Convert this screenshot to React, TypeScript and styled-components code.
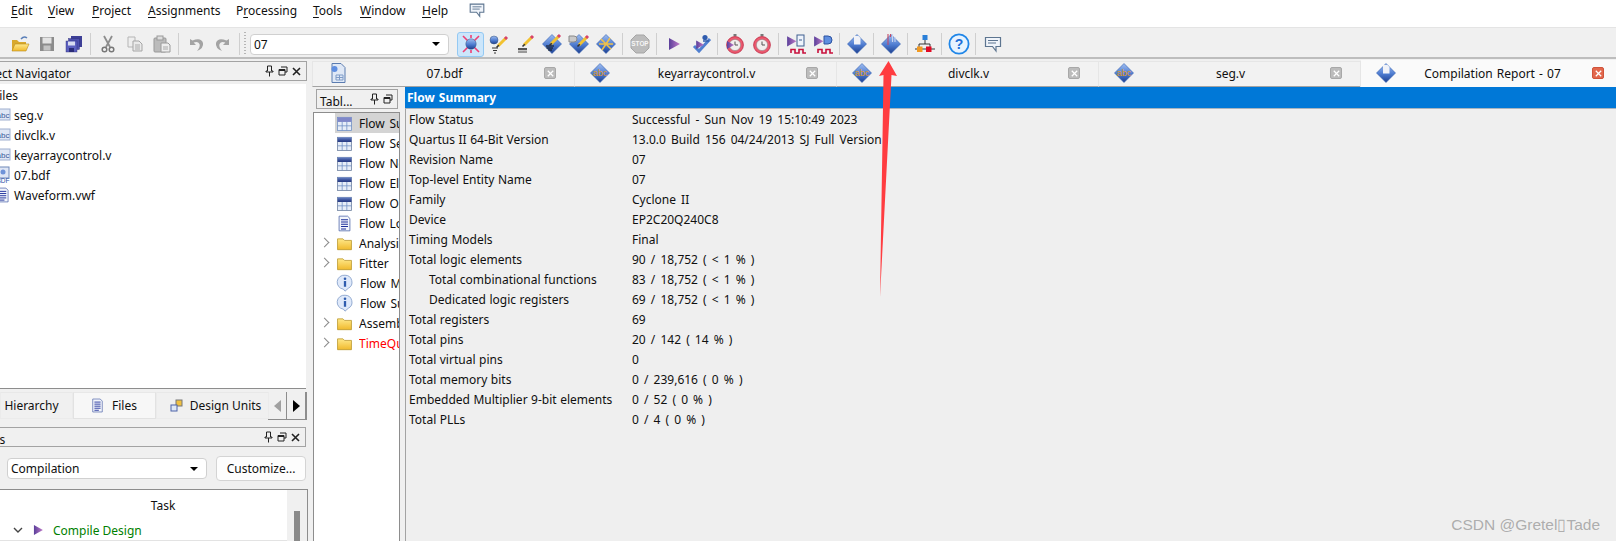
import styled, { createGlobalStyle } from 'styled-components';
import { ReactNode } from 'react';

const Global = createGlobalStyle`
  html, body { margin: 0; padding: 0; background: #f0f0f0; }
  body { font-family: 'Noto Sans', 'Open Sans', sans-serif; font-size: 12px; color: #101010; }
  svg { flex: none; }
`;

const Page = styled.div`
  position: relative;
  width: 1616px;
  height: 541px;
  overflow: hidden;
  display: flex;
  flex-direction: column;
  background: #f0f0f0;
`;

const MenuBar = styled.div`
  height: 28px;
  box-sizing: border-box;
  background: #fff;
  border-bottom: 1px solid #e4e4e4;
  padding: 0 0 5px 11px;
  display: flex;
  align-items: center;
`;

const MenuItem = styled.span<{ $w: number }>`
  width: ${p => p.$w}px;
  flex: none;
  line-height: 20px;
  u { text-underline-offset: 2px; }
`;

const MenuNote = styled.span`
  display: flex;
  margin: -3px 0 0 2px;
`;

const Toolbar = styled.div`
  height: 31px;
  box-sizing: border-box;
  border-bottom: 2px solid #bdbdbd;
  padding: 3px 0 0 6px;
  display: flex;
  align-items: center;
  background: #f0f0f0;
`;

const ToolBtn = styled.div<{ $on?: boolean }>`
  width: 27px;
  height: 25px;
  flex: none;
  box-sizing: border-box;
  display: flex;
  align-items: center;
  justify-content: center;
  border-radius: 3px;
  background: ${p => (p.$on ? '#cce6fb' : 'transparent')};
  border: 1px solid ${p => (p.$on ? '#94c9f3' : 'transparent')};
`;

const ToolSep = styled.div`
  width: 1px;
  height: 22px;
  margin: 0 3px;
  flex: none;
  background: #cfcfcf;
`;

const Grip = styled.div`
  width: 2px;
  height: 24px;
  margin: 0 4px 0 1px;
  flex: none;
  background: repeating-linear-gradient(#b5b5b5 0 1px, transparent 1px 3px);
`;

const Combo = styled.div<{ $w: number }>`
  width: ${p => p.$w}px;
  height: 21px;
  flex: none;
  box-sizing: border-box;
  border: 1px solid #d0d0d0;
  border-radius: 4px;
  background: #fff;
  padding: 0 8px 0 3px;
  display: flex;
  align-items: center;
  justify-content: space-between;
`;

const ComboArrow = styled.span`
  width: 0;
  height: 0;
  border-left: 4px solid transparent;
  border-right: 4px solid transparent;
  border-top: 4px solid #000;
`;

const ComboSlot = styled.div`
  margin-right: 8px;
  display: flex;
`;

const Main = styled.div`
  flex: 1;
  min-height: 0;
  display: flex;
`;

const LeftColumn = styled.div`
  width: 313px;
  flex: none;
  box-sizing: border-box;
  padding: 2px 6px 0 0;
  display: flex;
  flex-direction: column;
`;

const TitleBar = styled.div`
  height: 20px;
  flex: none;
  box-sizing: border-box;
  border: 1px solid #a3a3a3;
  border-left: none;
  overflow: hidden;
  display: flex;
  align-items: center;
  justify-content: space-between;
  padding-right: 5px;
`;

const ClippedTitle = styled.span<{ $cut: number }>`
  margin-left: -${p => p.$cut}px;
  white-space: nowrap;
  padding-top: 5px;
`;

const DockIcons = styled.div`
  display: flex;
  gap: 4px;
  align-items: center;
`;

const FileTree = styled.div`
  height: 305px;
  flex: none;
  margin-top: 3px;
  margin-right: 1px;
  box-sizing: border-box;
  background: #fff;
  border-bottom: 1px solid #8d8d8d;
  padding-top: 1px;
  overflow: hidden;
`;

const FileRow = styled.div`
  height: 20px;
  display: flex;
  align-items: center;
  gap: 3px;
  white-space: nowrap;
`;

const FileRoot = styled(FileRow)`
  margin-left: -7px;
`;

const FileIconSlot = styled.span`
  margin-left: -5px;
  width: 16px;
  flex: none;
  display: flex;
`;

const NavTabs = styled.div`
  height: 28px;
  flex: none;
  margin-top: 3px;
  display: flex;
`;

const NavTab = styled.div<{ $w: number; $on?: boolean; $shift?: number }>`
  width: ${p => p.$w}px;
  flex: none;
  box-sizing: border-box;
  display: flex;
  align-items: center;
  justify-content: center;
  gap: 7px;
  white-space: nowrap;
  height: 27px;
  padding-left: ${p => Math.max(p.$shift ?? 0, 0)}px;
  padding-right: ${p => Math.max(-(p.$shift ?? 0), 0)}px;
  background: ${p => (p.$on ? '#f7f7f7' : '#f0f0f0')};
  border: 1px solid ${p => (p.$on ? '#e2e2e2' : '#ebebeb')};
  border-top-color: #e8e8e8;
`;

const ScrollArrows = styled.div`
  display: flex;
  flex: none;
  height: 27px;
  border-right: 1px solid #8d8d8d;
  border-bottom: 1px solid #8d8d8d;
  margin-left: -1px;
`;

const ArrowBtn = styled.div<{ $off?: boolean; $dir: 'l' | 'r' }>`
  width: 19px;
  box-sizing: border-box;
  border-right: 1px solid #8d8d8d;
  display: flex;
  align-items: center;
  justify-content: center;
  &::before {
    content: '';
    border-top: 6px solid transparent;
    border-bottom: 6px solid transparent;
    border-${p => (p.$dir === 'l' ? 'right' : 'left')}: 7px solid ${p => (p.$off ? '#a0a0a0' : '#000')};
  }
`;

const TaskTitle = styled(TitleBar)`
  margin-top: 7px;
  margin-right: 1px;
`;

const TaskControls = styled.div`
  flex: none;
  height: 25px;
  margin-top: 9px;
  padding-left: 7px;
  display: flex;
  align-items: center;
  gap: 9px;
`;

const CustomizeBtn = styled.div`
  width: 90px;
  height: 25px;
  box-sizing: border-box;
  border: 1px solid #d4d4d4;
  border-radius: 4px;
  background: #fdfdfd;
  display: flex;
  align-items: center;
  justify-content: center;
`;

const TaskList = styled.div`
  flex: 1;
  margin-top: 8px;
  margin-right: -1px;
  box-sizing: border-box;
  background: #fff;
  border-top: 1px solid #8d8d8d;
  border-right: 1px solid #8d8d8d;
  display: flex;
  min-height: 0;
`;

const TaskBody = styled.div`
  flex: 1;
  padding-left: 7px;
`;

const TaskHead = styled.div`
  height: 30px;
  display: flex;
  align-items: center;
  justify-content: center;
  padding-left: 32px;
`;

const TaskRow = styled.div`
  height: 20px;
  border-bottom: 1px solid #e3e3e3;
  display: flex;
  align-items: center;
  margin-left: -7px;
  padding-left: 13px;
  color: #008000;
  gap: 6px;
`;

const TaskScroll = styled.div`
  width: 20px;
  flex: none;
  background: #f0f0f0;
  padding: 21px 0 0 7px;
  box-sizing: border-box;
`;

const TaskThumb = styled.div`
  width: 6px;
  height: 40px;
  background: #8a8a8a;
`;

const RightColumn = styled.div`
  flex: 1;
  min-width: 0;
  display: flex;
  flex-direction: column;
`;

const TabStrip = styled.div`
  height: 28px;
  flex: none;
  display: flex;
  margin-left: -1px;
`;

const DocTab = styled.div<{ $on?: boolean }>`
  width: 262px;
  flex: none;
  box-sizing: border-box;
  margin-top: ${p => (p.$on ? 1 : 2)}px;
  display: grid;
  grid-template-columns: 50px 1fr 48px;
  align-items: center;
  justify-items: center;
  word-spacing: 1px;
  background: ${p => (p.$on ? '#fafafa' : '#f2f2f2')};
  border-top: 1px solid ${p => (p.$on ? '#fafafa' : '#e6e6e6')};
  border-left: 1px solid #e6e6e6;
  border-bottom: ${p => (p.$on ? 'none' : '1px solid #a3a3a3')};
  padding-bottom: 2px;
`;

const CloseBox = styled.span<{ $on?: boolean }>`
  width: 12px;
  height: 12px;
  box-sizing: border-box;
  border-radius: 2px;
  display: flex;
  align-items: center;
  justify-content: center;
  background: ${p => (p.$on ? '#e2674c' : '#bcbcbc')};
  border: 1px solid ${p => (p.$on ? '#d0533a' : '#a8a8a8')};
`;

const Body = styled.div`
  flex: 1;
  min-height: 0;
  display: flex;
`;

const TablePane = styled.div`
  width: 87px;
  flex: none;
  display: flex;
  flex-direction: column;
`;

const TableTitle = styled(TitleBar)`
  margin: 2px 2px 0 3px;
  border: 1px solid #a3a3a3;
  padding-left: 3px;
  padding-right: 4px;
`;

const TableCaption = styled.span`
  padding-top: 4px;
`;

const ReportTree = styled.div`
  flex: 1;
  margin-top: 3px;
  box-sizing: border-box;
  background: #fff;
  border: 1px solid #8d8d8d;
  border-bottom: none;
  overflow: hidden;
`;

const TreeRow = styled.div<{ $sel?: boolean; $red?: boolean }>`
  height: 20px;
  margin-left: 21px;
  display: flex;
  align-items: center;
  gap: 6px;
  position: relative;
  white-space: nowrap;
  padding-left: 1px;
  color: ${p => (p.$red ? '#ff0000' : '#101010')};
  background: ${p => (p.$sel ? '#d4d4d4' : 'transparent')};
`;

const TreeName = styled.span`
  flex: 1;
  min-width: 0;
  overflow: hidden;
  word-spacing: 1.5px;
`;

const Chevron = styled.span`
  position: absolute;
  left: -14px;
  top: 6px;
  width: 6px;
  height: 6px;
  border-top: 1.5px solid #8a8a8a;
  border-right: 1.5px solid #8a8a8a;
  transform: rotate(45deg);
`;

const ReportPane = styled.div`
  flex: 1;
  margin-left: 5px;
  min-width: 0;
  display: flex;
  flex-direction: column;
`;

const ReportHead = styled.div`
  height: 21px;
  flex: none;
  box-sizing: border-box;
  background: #0078d7;
  color: #fff;
  font-weight: 700;
  padding-left: 2px;
  word-spacing: 1px;
  display: flex;
  align-items: center;
  padding-bottom: 1px;
`;

const ReportRows = styled.div`
  flex: 1;
  border-top: 1px solid #a8b4bf;
  border-left: 1px solid #a3a3a3;
  background: #efefef;
  padding-left: 3px;
`;

const ReportRow = styled.div`
  height: 20px;
  display: grid;
  grid-template-columns: 223px 1fr;
  align-items: center;
  white-space: nowrap;
`;

const RowLabel = styled.span<{ $indent?: boolean }>`
  padding-left: ${p => (p.$indent ? 20 : 0)}px;
  word-spacing: 0.4px;
`;

const RowValue = styled.span`
  word-spacing: 2px;
`;

const Watermark = styled.div`
  position: absolute;
  right: 16px;
  bottom: 7px;
  font-family: 'Liberation Sans', Arial, sans-serif;
  font-size: 15.5px;
  color: rgba(130, 130, 130, 0.62);
`;

const ArrowOverlay = styled.svg`
  position: absolute;
  left: 870px;
  top: 55px;
`;

const Gradients = () => (
  <svg width="0" height="0" style={{ position: 'absolute' }}>
    <defs>
      <linearGradient id="blueD" x1="0" y1="0" x2="0" y2="1">
        <stop offset="0" stopColor="#9fbdf0" />
        <stop offset="0.55" stopColor="#4d7bd0" />
        <stop offset="1" stopColor="#1d3f8f" />
      </linearGradient>
      <linearGradient id="folder" x1="0" y1="0" x2="0" y2="1">
        <stop offset="0" stopColor="#ffe98a" />
        <stop offset="1" stopColor="#f0b92c" />
      </linearGradient>
      <linearGradient id="purple" x1="0" y1="0" x2="1" y2="0">
        <stop offset="0" stopColor="#5a3f9a" />
        <stop offset="1" stopColor="#c07ac8" />
      </linearGradient>
      <linearGradient id="tbl" x1="0" y1="0" x2="0" y2="1">
        <stop offset="0" stopColor="#6a86c8" />
        <stop offset="1" stopColor="#1c2f7c" />
      </linearGradient>
    </defs>
  </svg>
);

const Sv = ({ s = 22, children }: { s?: number; children: ReactNode }) => (
  <svg width={s} height={s} viewBox="0 0 22 22">{children}</svg>
);

const Diamond = () => <path d="M11 1.5 L20.5 11 L11 20.5 L1.5 11 Z" fill="url(#blueD)" stroke="#2f5cae" strokeWidth=".6" />;
const Pencil = ({ x = 0, y = 0 }: { x?: number; y?: number }) => (
  <g transform={`translate(${x} ${y})`}>
    <path d="M7 13 L15 5" stroke="#f2c230" strokeWidth="3" />
    <path d="M14 6 L16 4" stroke="#d8426a" strokeWidth="3" />
    <path d="M7.8 12.2 L5.5 14.5" stroke="#333" strokeWidth="1.6" />
  </g>
);
const Ball = ({ cx = 11, cy = 11, r = 5 }: { cx?: number; cy?: number; r?: number }) => (
  <circle cx={cx} cy={cy} r={r} fill="url(#blueD)" stroke="#35517f" strokeWidth=".5" />
);
const Wave = () => <path d="M6 20 V16.5 H10 V20 H14 V16.5 H18 V20 H21" fill="none" stroke="#c8103c" strokeWidth="1.6" />;
const Play = ({ x = 0, y = 0, s = 1 }: { x?: number; y?: number; s?: number }) => (
  <path transform={`translate(${x} ${y}) scale(${s})`} d="M6 5 L17 11 L6 17 Z" fill="url(#purple)" />
);
const Stopwatch = ({ over }: { over?: boolean }) => (
  <>
    <rect x="9.5" y="1" width="3" height="2.5" fill="#777" />
    <circle cx="11" cy="12" r="8.4" fill="#ea5a6f" stroke="#c22c46" strokeWidth=".8" />
    <circle cx="11" cy="12" r="5.6" fill="#f2eeee" stroke="#888" strokeWidth=".5" />
    <path d="M11 8.5 V12 H14" fill="none" stroke="#555" strokeWidth="1" />
    {over && <path d="M3 8 L10 12 L3 16 Z" fill="url(#purple)" />}
  </>
);

const DocDiamond = () => (
  <Sv>
    <Diamond />
    <path d="M8 3 H12.5 L14.5 5 V11.5 H8 Z" fill="#f0f2f8" />
  </Sv>
);

const NoteIcon = ({ s = 22 }: { s?: number }) => (
  <Sv s={s}>
    <path d="M3.5 4.5 H18.5 V13.5 H14 V18 L10.5 13.5 H3.5 Z" fill="#f0f4fa" stroke="#5d7590" strokeWidth="1.2" />
    <path d="M6 7.5 H16 M6 10 H14" stroke="#5d7590" />
  </Sv>
);

const toolIcons: Record<string, ReactNode> = {
  open: (
    <Sv>
      <path d="M3 7 H8 L10 9 H17 V18 H3 Z" fill="#d9a92c" />
      <path d="M3 18 L6 11 H20 L17 18 Z" fill="url(#folder)" stroke="#b88a1c" strokeWidth=".6" />
      <path d="M12 6 Q15 2.5 18 5" fill="none" stroke="#5a7fb8" strokeWidth="1.5" />
    </Sv>
  ),
  save: (
    <Sv>
      <rect x="4" y="4" width="14" height="14" fill="#8c8c8c" />
      <rect x="6.5" y="4.5" width="9" height="6" fill="#e4e4e4" />
      <rect x="7.5" y="12.5" width="7" height="5" fill="#c4c4c4" />
    </Sv>
  ),
  saveAll: (
    <Sv>
      <rect x="8" y="3" width="11" height="11" fill="#3d3f96" />
      <rect x="5.5" y="5.5" width="11" height="11" fill="#4e51ae" stroke="#2a2c78" strokeWidth=".4" />
      <rect x="3" y="8" width="11" height="11" fill="#5c60bf" stroke="#2a2c78" strokeWidth=".4" />
      <rect x="5" y="8.5" width="7" height="4" fill="#d8dcf0" />
      <rect x="6" y="15" width="5" height="4" fill="#2a2c78" />
    </Sv>
  ),
  cut: (
    <Sv>
      <path d="M7 3 L13 14 M15 3 L9 14" stroke="#8d8d8d" strokeWidth="1.8" fill="none" />
      <circle cx="7.5" cy="16.5" r="2.3" fill="none" stroke="#777" strokeWidth="1.5" />
      <circle cx="14.5" cy="16.5" r="2.3" fill="none" stroke="#777" strokeWidth="1.5" />
    </Sv>
  ),
  copy: (
    <Sv>
      <path d="M4 4 H11 V14 H4 Z" fill="#eee" stroke="#b5b5b5" />
      <path d="M9 8 H15 L18 11 V18 H9 Z" fill="#eaeaea" stroke="#a5a5a5" />
      <path d="M11 12 H16 M11 14 H16 M11 16 H16" stroke="#aaa" />
    </Sv>
  ),
  paste: (
    <Sv>
      <rect x="3" y="5" width="12" height="14" rx="1" fill="#bbb" stroke="#999" />
      <rect x="6" y="3" width="6" height="4" fill="#ddd" stroke="#999" />
      <path d="M10 10 H17 L19 12 V19 H10 Z" fill="#ededed" stroke="#9a9a9a" />
      <path d="M12 14 H17 M12 16 H17" stroke="#aaa" />
    </Sv>
  ),
  undo: (
    <Sv>
      <path d="M5 6 V12 H11 L8.6 9.6 Q13 8 14.5 11 Q15.5 14 12 18 Q19 15 18 10 Q16 4 7.5 7.6 Z" fill="#a3a3a3" />
    </Sv>
  ),
  redo: (
    <Sv>
      <path d="M17 6 V12 H11 L13.4 9.6 Q9 8 7.5 11 Q6.5 14 10 18 Q3 15 4 10 Q6 4 14.5 7.6 Z" fill="#a3a3a3" />
    </Sv>
  ),
  analyze: (
    <Sv>
      <path d="M3 3 L9 9 M19 3 L13 9 M3 19 L9 13 M19 19 L13 13 M11 2 V5 M11 17 V20" stroke="#ee3f74" strokeWidth="1.6" />
      <Ball r={5.2} />
    </Sv>
  ),
  ballPencil: (
    <Sv>
      <Ball cx={7} cy={7} r={4} />
      <Pencil x={4} y={0} />
      <path d="M5 15 H11 M6 17.5 H10 M7 20 H9" stroke="#333" />
    </Sv>
  ),
  pencilBar: (
    <Sv>
      <Pencil x={3} y={-1} />
      <rect x="4" y="15" width="9" height="2" fill="#555" />
      <rect x="4" y="17.5" width="9" height="2.5" fill="#999" />
    </Sv>
  ),
  diamondPencil: (
    <Sv>
      <Diamond />
      <path d="M5 13 H13 M5.5 15 H12 M7 17 H11" stroke="#111" />
      <Pencil x={3} y={-2} />
    </Sv>
  ),
  diamondGate: (
    <Sv>
      <Diamond />
      <path d="M1 3 H6 Q9 3 9 6 Q9 9 6 9 H1 Z" fill="#c9c9c9" stroke="#888" />
      <Pencil x={4} y={-1} />
    </Sv>
  ),
  diamondCross: (
    <Sv>
      <Diamond />
      <path d="M6 6 L16 16 M15 5 L7 17 M4 11 H18" stroke="#eec04a" strokeWidth="1.6" />
    </Sv>
  ),
  stop: (
    <Sv>
      <path d="M7 2 H15 L20 7 V15 L15 20 H7 L2 15 V7 Z" fill="#bcbcbc" stroke="#a5a5a5" />
      <text x="11" y="13" textAnchor="middle" fontSize="6.4" fontWeight="700" fill="#f6f6f6" fontFamily="Liberation Sans">STOP</text>
    </Sv>
  ),
  play: <Sv><Play /></Sv>,
  playCheck: (
    <Sv>
      <path d="M4 13 L9 18 L20 6" fill="none" stroke="#4f7fd0" strokeWidth="3" />
      <Play x={2} y={4} s={0.7} />
      <circle cx="15" cy="4.5" r="2.6" fill="#2f5cae" />
      <path d="M13 8 H19" stroke="#2f5cae" strokeWidth="1.5" />
    </Sv>
  ),
  watchPlay: <Sv><Stopwatch over /></Sv>,
  watch: <Sv><Stopwatch /></Sv>,
  waveBox: (
    <Sv>
      <Play x={-3} y={-1} s={0.85} />
      <rect x="12" y="2" width="7" height="11" fill="#eef3fb" stroke="#3f5f90" />
      <path d="M14 7 H17" stroke="#3f5f90" />
      <Wave />
    </Sv>
  ),
  waveGate: (
    <Sv>
      <Play x={-3} y={-1} s={0.85} />
      <path d="M12 3 H16 Q20 3 20 7 Q20 11 16 11 H12 Z" fill="#5f8ee0" stroke="#2c52a0" />
      <Wave />
    </Sv>
  ),
  diamondDoc: <DocDiamond />,
  diamondChip: (
    <Sv>
      <Diamond />
      <path d="M8 1 V12 M10.5 1 V4" stroke="#c24a68" strokeWidth="1.1" />
      <path d="M12.5 1 V9 M15 4 V9" stroke="#c8d4f0" strokeWidth="1.1" />
    </Sv>
  ),
  hier: (
    <Sv>
      <rect x="8.5" y="2" width="5" height="5" fill="#2a7fd8" />
      <path d="M11 7 V11 M5 11 H16 M5 11 V14 M16 11 V14 M1 16 H21" stroke="#222" strokeWidth=".9" />
      <rect x="3" y="13.5" width="5.5" height="5.5" fill="#f39a20" />
      <rect x="12" y="13.5" width="5.5" height="5.5" fill="#e20a24" />
    </Sv>
  ),
  help: (
    <Sv>
      <circle cx="11" cy="11" r="9.6" fill="#e7f3ff" stroke="#1f86e8" strokeWidth="1.8" />
      <text x="11" y="16" textAnchor="middle" fontSize="14" fontWeight="700" fill="#1f6fd8" fontFamily="Liberation Sans">?</text>
    </Sv>
  ),
  note: <NoteIcon />,
};

const AbcDiamond = () => (
  <Sv>
    <Diamond />
    <text x="11" y="13.5" textAnchor="middle" fontSize="9" fill="#e39a2a" fontFamily="Liberation Sans">abc</text>
  </Sv>
);

const BdfIcon = () => (
  <Sv>
    <path d="M5 1.5 H14 L18 5.5 V20.5 H5 Z" fill="#dfe8f6" stroke="#5b7cb0" />
    <circle cx="7.5" cy="7" r="3" fill="#5f8ee0" />
    <path d="M9 13 H16 V18 H9 Z M12.5 13 V18 M9 15.5 H16" fill="none" stroke="#7f9cc8" />
  </Sv>
);

const TableIcon = ({ on }: { on?: boolean }) => (
  <Sv s={17}>
    <rect x="2" y="3" width="18" height="17" fill="#e6edf8" stroke={on ? '#6f8fc4' : '#6c7f9c'} />
    <rect x="2" y="3" width="18" height="6" fill={on ? '#7f87c8' : 'url(#tbl)'} />
    <path d="M2 14 H20 M8 9 V20 M14 9 V20" stroke="#6f8fc4" />
  </Sv>
);

const TextDocIcon = ({ s = 17 }: { s?: number }) => (
  <Sv s={s}>
    <path d="M4 1.5 H15 L18 4.5 V20.5 H4 Z" fill="#f2f5fb" stroke="#4c63a8" />
    <path d="M6.5 6 H15.5 M6.5 9 H15.5 M6.5 12 H15.5 M6.5 15 H15.5 M6.5 18 H13" stroke="#1d2f9a" strokeWidth="1.3" />
  </Sv>
);

const FolderIcon = () => (
  <Sv s={17}>
    <path d="M2 5 H9 L11 7 H20 V19 H2 Z" fill="url(#folder)" stroke="#b9962a" />
  </Sv>
);

const InfoIcon = () => (
  <Sv s={18}>
    <path d="M11 1.5 A8.5 8.5 0 0 1 15 17.5 L11 21 L9 18.5 A8.5 8.5 0 0 1 11 1.5 Z" fill="#dfe9fa" stroke="#7f9cc8" />
    <circle cx="11" cy="5.8" r="1.6" fill="#2f5cae" />
    <rect x="9.6" y="8.6" width="2.8" height="7" fill="#2f5cae" />
  </Sv>
);

const VerilogFileIcon = () => (
  <svg width="16" height="16" viewBox="0 0 16 16">
    <rect x="1" y="2" width="14" height="11" fill="#dfe6f5" stroke="#9fb0d0" />
    <text x="8" y="11" textAnchor="middle" fontSize="8" fill="#3b5a9a" fontFamily="Liberation Sans">abc</text>
  </svg>
);

const BdfFileIcon = () => (
  <svg width="16" height="18" viewBox="0 0 16 18">
    <rect x="2" y="1" width="12" height="11" fill="#dfe6f5" stroke="#6f88b8" />
    <circle cx="8" cy="6" r="2.5" fill="#6f93d8" />
    <text x="8" y="17" textAnchor="middle" fontSize="6.5" fill="#2a4fa8" fontFamily="Liberation Sans">BDF</text>
  </svg>
);

const Pin = () => (
  <svg width="9" height="12" viewBox="0 0 9 12">
    <path d="M2.5 1 H6.5 V6 H8 V7 H1 V6 H2.5 Z M4.5 7 V11.5" fill="none" stroke="#222" />
  </svg>
);
const Restore = () => (
  <svg width="10" height="10" viewBox="0 0 10 10">
    <path d="M3 1 H9 V6 H7 M1 3.5 H7 V9 H1 Z M1 4.5 H7" fill="none" stroke="#222" />
  </svg>
);
const CloseX = ({ size = 9, color = '#222' }: { size?: number; color?: string }) => (
  <svg width={size} height={size} viewBox="0 0 9 9">
    <path d="M1 1 L8 8 M8 1 L1 8" stroke={color} strokeWidth="1.6" />
  </svg>
);

const Dock = ({ close = true }: { close?: boolean }) => (
  <DockIcons>
    <Pin />
    <Restore />
    {close && <CloseX />}
  </DockIcons>
);

const menus: [string, number][] = [
  ['Edit', 37],
  ['View', 44],
  ['Project', 56],
  ['Assignments', 88],
  ['Processing', 77],
  ['Tools', 47],
  ['Window', 62],
  ['Help', 43],
];

const toolsA = [['open', 'save', 'saveAll'], ['cut', 'copy', 'paste'], ['undo', 'redo']];
const toolsB = [
  ['analyze', 'ballPencil', 'pencilBar', 'diamondPencil', 'diamondGate', 'diamondCross'],
  ['stop'],
  ['play', 'playCheck'],
  ['watchPlay', 'watch'],
  ['waveBox', 'waveGate'],
  ['diamondDoc'],
  ['diamondChip'],
  ['hier'],
  ['help'],
  ['note'],
];

const docTabs = [
  { name: '07.bdf', icon: <BdfIcon /> },
  { name: 'keyarraycontrol.v', icon: <AbcDiamond /> },
  { name: 'divclk.v', icon: <AbcDiamond /> },
  { name: 'seg.v', icon: <AbcDiamond /> },
  { name: 'Compilation Report - 07', icon: <DocDiamond />, on: true },
];

const reportTree: { name: string; kind: string; sel?: boolean; red?: boolean }[] = [
  { name: 'Flow Summary', kind: 'tableOn', sel: true },
  { name: 'Flow Settings', kind: 'table' },
  { name: 'Flow Non-Default Global Settings', kind: 'table' },
  { name: 'Flow Elapsed Time', kind: 'table' },
  { name: 'Flow OS Summary', kind: 'table' },
  { name: 'Flow Log', kind: 'doc' },
  { name: 'Analysis & Synthesis', kind: 'folder' },
  { name: 'Fitter', kind: 'folder' },
  { name: 'Flow Messages', kind: 'info' },
  { name: 'Flow Suppressed Messages', kind: 'info' },
  { name: 'Assembler', kind: 'folder' },
  { name: 'TimeQuest Timing Analyzer', kind: 'folder', red: true },
];

const reportRows: [string, string, boolean?][] = [
  ['Flow Status', 'Successful - Sun Nov 19 15:10:49 2023'],
  ['Quartus II 64-Bit Version', '13.0.0 Build 156 04/24/2013 SJ Full Version'],
  ['Revision Name', '07'],
  ['Top-level Entity Name', '07'],
  ['Family', 'Cyclone II'],
  ['Device', 'EP2C20Q240C8'],
  ['Timing Models', 'Final'],
  ['Total logic elements', '90 / 18,752 ( < 1 % )'],
  ['Total combinational functions', '83 / 18,752 ( < 1 % )', true],
  ['Dedicated logic registers', '69 / 18,752 ( < 1 % )', true],
  ['Total registers', '69'],
  ['Total pins', '20 / 142 ( 14 % )'],
  ['Total virtual pins', '0'],
  ['Total memory bits', '0 / 239,616 ( 0 % )'],
  ['Embedded Multiplier 9-bit elements', '0 / 52 ( 0 % )'],
  ['Total PLLs', '0 / 4 ( 0 % )'],
];

const treeIcon = (kind: string) => {
  if (kind === 'table') return <TableIcon />;
  if (kind === 'tableOn') return <TableIcon on />;
  if (kind === 'doc') return <TextDocIcon />;
  if (kind === 'info') return <InfoIcon />;
  return <FolderIcon />;
};

const ToolGroup = ({ names, sep }: { names: string[]; sep: boolean }) => (
  <>
    {names.map(n => (
      <ToolBtn key={n} $on={n === 'analyze'}>{toolIcons[n]}</ToolBtn>
    ))}
    {sep && <ToolSep />}
  </>
);

export default function App() {
  return (
    <Page>
      <Global />
      <Gradients />
      <MenuBar>
        {menus.map(([name, w]) => (
          <MenuItem key={name} $w={w}>
            {name === 'Processing' ? <>P<u>r</u>ocessing</> : <><u>{name[0]}</u>{name.slice(1)}</>}
          </MenuItem>
        ))}
        <MenuNote><NoteIcon s={20} /></MenuNote>
      </MenuBar>

      <Toolbar>
        {toolsA.map((g, i) => <ToolGroup key={i} names={g} sep />)}
        <Grip />
        <ComboSlot>
          <Combo $w={199}>07<ComboArrow /></Combo>
        </ComboSlot>
        {toolsB.map((g, i) => <ToolGroup key={i} names={g} sep={i < toolsB.length - 1} />)}
      </Toolbar>

      <Main>
        <LeftColumn>
          <TitleBar>
            <ClippedTitle $cut={27}>Project Navigator</ClippedTitle>
            <Dock />
          </TitleBar>
          <FileTree>
            <FileRoot>Files</FileRoot>
            <FileRow><FileIconSlot><VerilogFileIcon /></FileIconSlot>seg.v</FileRow>
            <FileRow><FileIconSlot><VerilogFileIcon /></FileIconSlot>divclk.v</FileRow>
            <FileRow><FileIconSlot><VerilogFileIcon /></FileIconSlot>keyarraycontrol.v</FileRow>
            <FileRow><FileIconSlot><BdfFileIcon /></FileIconSlot>07.bdf</FileRow>
            <FileRow><FileIconSlot><TextDocIcon s={16} /></FileIconSlot>Waveform.vwf</FileRow>
          </FileTree>
          <NavTabs>
            <NavTab $w={73} $shift={-10}>Hierarchy</NavTab>
            <NavTab $w={83} $on $shift={-2}><TextDocIcon s={15} />Files</NavTab>
            <NavTab $w={113} $shift={6}>
              <svg width="13" height="13" viewBox="0 0 13 13">
                <rect x="6" y="1" width="6" height="6" fill="#f0c040" stroke="#777" />
                <rect x="1" y="6" width="6" height="6" fill="#dfe8f6" stroke="#4c63a8" />
              </svg>
              Design Units
            </NavTab>
            <ScrollArrows>
              <ArrowBtn $dir="l" $off />
              <ArrowBtn $dir="r" />
            </ScrollArrows>
          </NavTabs>
          <TaskTitle>
            <ClippedTitle $cut={25}>Tasks</ClippedTitle>
            <Dock />
          </TaskTitle>
          <TaskControls>
            <Combo $w={200}>Compilation<ComboArrow /></Combo>
            <CustomizeBtn>Customize...</CustomizeBtn>
          </TaskControls>
          <TaskList>
            <TaskBody>
              <TaskHead>Task</TaskHead>
              <TaskRow>
                <svg width="10" height="7" viewBox="0 0 10 7">
                  <path d="M1 1 L5 5 L9 1" fill="none" stroke="#444" strokeWidth="1.4" />
                </svg>
                <Sv s={18}><Play /></Sv>
                Compile Design
              </TaskRow>
            </TaskBody>
            <TaskScroll><TaskThumb /></TaskScroll>
          </TaskList>
        </LeftColumn>

        <RightColumn>
          <TabStrip>
            {docTabs.map(t => (
              <DocTab key={t.name} $on={t.on}>
                {t.icon}
                <span>{t.name}</span>
                <CloseBox $on={t.on}><CloseX size={7} color="#fff" /></CloseBox>
              </DocTab>
            ))}
          </TabStrip>
          <Body>
            <TablePane>
              <TableTitle>
                <TableCaption>Tabl...</TableCaption>
                <Dock close={false} />
              </TableTitle>
              <ReportTree>
                {reportTree.map(r => (
                  <TreeRow key={r.name} $sel={r.sel} $red={r.red}>
                    {r.kind === 'folder' && <Chevron />}
                    {treeIcon(r.kind)}
                    <TreeName>{r.name}</TreeName>
                  </TreeRow>
                ))}
              </ReportTree>
            </TablePane>
            <ReportPane>
              <ReportHead>Flow Summary</ReportHead>
              <ReportRows>
                {reportRows.map(([label, value, indent]) => (
                  <ReportRow key={label}>
                    <RowLabel $indent={indent}>{label}</RowLabel>
                    <RowValue>{value}</RowValue>
                  </ReportRow>
                ))}
              </ReportRows>
            </ReportPane>
          </Body>
        </RightColumn>
      </Main>

      <ArrowOverlay width="40" height="245" viewBox="0 0 40 245">
        <path d="M18.5 6 L27 21 L21.5 20 L10 242 L13.5 20 L9 21 Z" fill="#ff3c40" />
      </ArrowOverlay>
      <Watermark>CSDN @Gretel▯Tade</Watermark>
    </Page>
  );
}
